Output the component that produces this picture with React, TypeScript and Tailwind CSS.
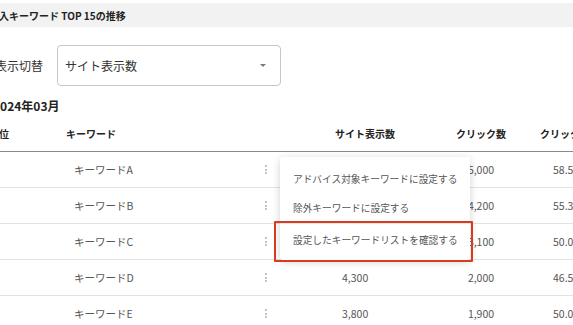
import React from "react";

const rows = [
  { rank: "1", kw: "キーワードA", site: "", click: "5,000", ctr: "58.5%" },
  { rank: "2", kw: "キーワードB", site: "", click: "4,200", ctr: "55.3%" },
  { rank: "3", kw: "キーワードC", site: "", click: "3,100", ctr: "50.0%" },
  { rank: "4", kw: "キーワードD", site: "4,300", click: "2,000", ctr: "46.5%" },
  { rank: "5", kw: "キーワードE", site: "3,800", click: "1,900", ctr: "50.0%" },
];

function Kebab() {
  return (
    <div className="flex flex-col gap-[1.5px]">
      <span className="block w-[2px] h-[2px] bg-[#c4c4c4]" />
      <span className="block w-[2px] h-[2px] bg-[#c4c4c4]" />
      <span className="block w-[2px] h-[2px] bg-[#c4c4c4]" />
    </div>
  );
}

export default function App() {
  return (
    <div
      className="relative w-[573px] h-[325px] overflow-hidden bg-white text-[#333]"
      style={{ fontFamily: '"Noto Sans CJK JP", "Noto Sans", sans-serif' }}
    >
      <div className="ml-[-12px] w-[620px] pt-[3px]">
        <div className="h-[24px] bg-[#f2f2f2] flex items-center pl-[1px] text-[10px] font-bold text-[#222]">
          流入キーワード TOP 15の推移
        </div>

        <div className="mt-[18px] flex items-center pl-[7px]">
          <span className="text-[12px] text-[#333] w-[50px]">表示切替</span>
          <div className="ml-[12px] w-[224px] h-[41px] border border-[#c6c6c6] rounded-[4px] flex items-center justify-between pl-[7px] pr-[14px]">
            <span className="text-[12px] text-[#333]">サイト表示数</span>
            <span className="block w-0 h-0 border-l-[3.5px] border-r-[3.5px] border-t-[3.5px] border-l-transparent border-r-transparent border-t-[#7a7a7a]" />
          </div>
        </div>

        <div className="mt-[12px] pl-[5px] h-[16px] flex items-center text-[12px] font-bold text-[#222]">
          2024年03月
        </div>

        <div className="mt-[1px]">
          <div className="flex h-[37px] items-center border-b border-[#8a8a8a] text-[10px] font-bold text-[#222]">
            <div className="w-[78px] pl-[1px]">順位</div>
            <div className="w-[214px]">キーワード</div>
            <div className="w-[150px] pl-[55px]">サイト表示数</div>
            <div className="w-[102px] text-center">クリック数</div>
            <div className="pl-[8px]">クリック率</div>
          </div>
          {rows.map((r) => (
            <div
              key={r.rank}
              className="flex h-[36px] items-center border-b border-[#e2e2e2] text-[10.5px] text-[#555]"
            >
              <div className="w-[78px] pl-[4px]">{r.rank}</div>
              <div className="w-[214px] flex items-center justify-between pl-[8px] pr-[13px]">
                <span>{r.kw}</span>
                <Kebab />
              </div>
              <div className="w-[150px] pl-[62px]">{r.site}</div>
              <div className="w-[102px] text-center">{r.click}</div>
              <div className="pl-[21px]">{r.ctr}</div>
            </div>
          ))}
        </div>
      </div>

      <div className="absolute left-[280px] top-[157px] w-[190px] bg-white rounded-[3px] shadow-[0_2px_8px_rgba(0,0,0,0.18)] pt-[8px] pb-[4px] text-[9.7px] text-[#555]">
        <div className="h-[29px] flex items-center pl-[13px]">アドバイス対象キーワードに設定する</div>
        <div className="h-[29px] flex items-center pl-[13px]">除外キーワードに設定する</div>
        <div className="h-[33px] flex items-center pl-[13px] border-t border-[#e8e8e8]">設定したキーワードリストを確認する</div>
      </div>

      <div className="absolute left-[274px] top-[221px] w-[199px] h-[41px] border-2 border-[#d83b1e] rounded-[1px]" />
    </div>
  );
}
